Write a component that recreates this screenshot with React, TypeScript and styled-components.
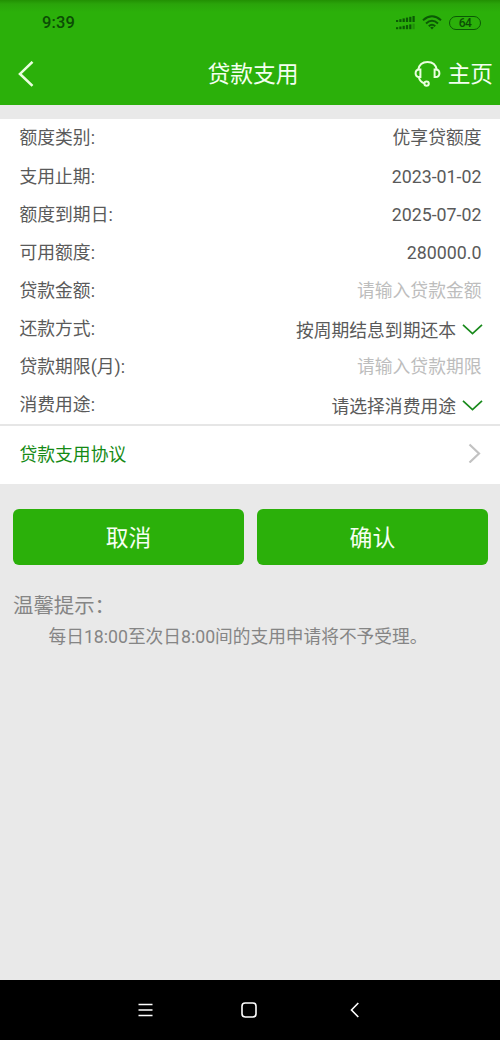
import React from "react";
import styled, { createGlobalStyle } from "styled-components";

const Global = createGlobalStyle`
  * { box-sizing: border-box; }
  body {
    margin: 0;
    background: #e9e9e9;
    font-family: Roboto, "Noto Sans CJK SC", sans-serif;
  }
`;

const Screen = styled.div`
  width: 500px;
  height: 1040px;
  display: flex;
  flex-direction: column;
  background: #e9e9e9;
  overflow: hidden;
`;

const Header = styled.header`
  height: 105px;
  flex: none;
  background: linear-gradient(#229003 0, #2aa40a 4px, #2bb00a 12px);
`;

const StatusBar = styled.div`
  height: 44px;
  padding: 1px 19px 0 42px;
  display: flex;
  align-items: center;
  color: #0b4d05;
`;

const Clock = styled.span`
  flex: 1;
  font-size: 16.5px;
  font-weight: 500;
  letter-spacing: 0.1px;
`;

const Signal = styled.svg`
  margin-right: 7px;
`;

const Wifi = styled.svg`
  margin-right: 7px;
`;

const Battery = styled.span`
  width: 32px;
  height: 14px;
  border: 1.5px solid #0b5a05;
  border-radius: 7px;
  display: flex;
  align-items: center;
  justify-content: center;
  font-size: 12px;
  line-height: 12px;
  font-weight: 500;
  letter-spacing: -0.5px;
`;

const TitleBar = styled.div`
  height: 61px;
  padding: 0 7px 0 18px;
  display: grid;
  grid-template-columns: 80px 1fr 80px;
  align-items: center;
  color: #f4fff0;
`;

const Title = styled.h1`
  margin: 0;
  padding-right: 5px;
  text-align: center;
  font-size: 22.8px;
  font-weight: 400;
  line-height: 34px;
`;

const HomeLink = styled.div`
  display: flex;
  align-items: center;
  justify-content: flex-end;
  gap: 7px;
  font-size: 22.7px;
  line-height: 34px;
  white-space: nowrap;
`;

const Form = styled.section`
  margin-top: 14px;
  flex: none;
  background: #fff;
  border-bottom: 2px solid #e6e6e6;
`;

const Row = styled.div`
  height: 38.2px;
  padding: 0.5px 18px 0 19.5px;
  display: flex;
  align-items: center;
  justify-content: space-between;
  font-size: 17.8px;
  line-height: 26px;
  color: #5a5a5a;

  &:last-child {
    height: 37.6px;
  }
`;

const Value = styled.span<{ $hint?: boolean; $select?: boolean }>`
  display: flex;
  align-items: center;
  gap: 6px;
  color: ${(p) => (p.$hint ? "#bdbdbd" : "#5a5a5a")};
  padding-top: ${(p) => (p.$select ? "3px" : "0")};
  margin-right: ${(p) => (p.$select ? "-1px" : "0.5px")};
`;

const Agreement = styled.div`
  height: 57.6px;
  flex: none;
  padding: 0 19px 3px 19.5px;
  display: flex;
  align-items: center;
  justify-content: space-between;
  background: #fff;
  font-size: 17.8px;
  color: #158a15;
`;

const Actions = styled.div`
  margin-top: 25px;
  padding: 0 12px 0 13px;
  display: grid;
  grid-template-columns: 1fr 1fr;
  gap: 12.6px;
`;

const Button = styled.button`
  height: 56px;
  padding: 0 0 1px;
  border: 0;
  border-radius: 6px;
  background: #2bb00a;
  color: #f6fff3;
  font-family: inherit;
  font-size: 22.8px;
`;

const Tips = styled.section`
  flex: 1;
  padding: 25px 13px 0;
  color: #858585;
`;

const TipsTitle = styled.div`
  font-size: 20.4px;
  line-height: 32px;
`;

const TipsText = styled.div`
  padding-left: 35.5px;
  font-size: 17.7px;
  line-height: 31px;
  white-space: nowrap;
`;

const NavBar = styled.nav`
  height: 60px;
  flex: none;
  padding: 0 140.5px 0 138px;
  display: flex;
  align-items: center;
  justify-content: space-between;
  background: #000;
`;

const HomeKey = styled.svg`
  margin-right: 5.5px;
`;

const rows: { label: string; value: string; kind?: "hint" | "select" }[] = [
  { label: "额度类别:", value: "优享贷额度" },
  { label: "支用止期:", value: "2023-01-02" },
  { label: "额度到期日:", value: "2025-07-02" },
  { label: "可用额度:", value: "280000.0" },
  { label: "贷款金额:", value: "请输入贷款金额", kind: "hint" },
  { label: "还款方式:", value: "按周期结息到期还本", kind: "select" },
  { label: "贷款期限(月):", value: "请输入贷款期限", kind: "hint" },
  { label: "消费用途:", value: "请选择消费用途", kind: "select" },
];

const signalBars = [0, 1, 2, 3, 4, 5];

const DownChevron = () => (
  <svg width="21" height="14" viewBox="0 0 21 14" fill="none" stroke="#198a1c" strokeWidth="1.7">
    <path d="M1 0.8 L10.5 9.6 L20 0.8" />
  </svg>
);

export default function App() {
  return (
    <Screen>
      <Global />
      <Header>
        <StatusBar>
          <Clock>9:39</Clock>
          <Signal width="19" height="16" viewBox="0 0 19 16" fill="#0b5a05">
            {signalBars.map((i) => (
              <rect key={i} x={i * 3.3} y={5 - i * 0.8} width="2.2" height={2 + i * 0.8} />
            ))}
            {signalBars.map((i) => (
              <rect
                key={i}
                x={i * 3.3}
                y={12.2 - i * 0.7}
                width="2.2"
                height={2 + i * 0.7}
                opacity={i === 5 ? 0.35 : 1}
              />
            ))}
          </Signal>
          <Wifi width="20" height="15" viewBox="0 0 20 15" fill="none" stroke="#0b5a05" strokeWidth="2">
            <path d="M1 5.2 Q10 -2.6 19 5.2" />
            <path d="M4 8.4 Q10 3 16 8.4" />
            <path d="M6.8 11.2 Q10 8.2 13.2 11.2" />
            <path d="M8.2 12.4 Q10 11 11.8 12.4 L10 14.4Z" fill="#0b5a05" stroke="none" />
          </Wifi>
          <Battery>64</Battery>
        </StatusBar>
        <TitleBar>
          <svg width="16" height="28" viewBox="0 0 16 28" fill="none" stroke="#eaffdf" strokeWidth="2.6">
            <path d="M14.5 0.9 L2 12.9 L14.5 24.9" />
          </svg>
          <Title>贷款支用</Title>
          <HomeLink>
            <svg width="27" height="28" viewBox="0 0 27 28" fill="none" stroke="#eaffdf" strokeWidth="2">
              <path d="M4.2 9 C5 4.1 8.6 1.1 13.5 1.1 C18.4 1.1 22 4.1 22.8 9" />
              <path d="M6.4 8.5 V16.1 H5.3 C3 16.1 1.6 14.5 1.6 12.3 C1.6 10.1 3 8.5 5.3 8.5Z" />
              <path d="M20.6 8.5 V16.1 H21.7 C24 16.1 25.4 14.5 25.4 12.3 C25.4 10.1 24 8.5 21.7 8.5Z" />
              <path d="M4.8 16.3 C5.7 19.7 7.5 21.5 10.2 22.3" />
              <circle cx="12.6" cy="22.6" r="2.2" />
            </svg>
            主页
          </HomeLink>
        </TitleBar>
      </Header>

      <Form>
        {rows.map((r) => (
          <Row key={r.label}>
            <span>{r.label}</span>
            <Value $hint={r.kind === "hint"} $select={r.kind === "select"}>
              {r.value}
              {r.kind === "select" && <DownChevron />}
            </Value>
          </Row>
        ))}
      </Form>

      <Agreement>
        贷款支用协议
        <svg width="13" height="20" viewBox="0 0 13 20" fill="none" stroke="#c2c2c2" strokeWidth="2.2">
          <path d="M1.5 1.5 L11 10.5 L1.5 19.5" />
        </svg>
      </Agreement>

      <Actions>
        <Button>取消</Button>
        <Button>确认</Button>
      </Actions>

      <Tips>
        <TipsTitle>温馨提示：</TipsTitle>
        <TipsText>每日18:00至次日8:00间的支用申请将不予受理。</TipsText>
      </Tips>

      <NavBar>
        <svg width="15" height="14" viewBox="0 0 15 14" stroke="#fff" strokeWidth="1.5">
          <path d="M0.5 1.5 H14.5 M0.5 7 H14.5 M0.5 12.5 H14.5" />
        </svg>
        <HomeKey width="16" height="16" viewBox="0 0 16 16" fill="none" stroke="#fff" strokeWidth="1.6">
          <rect x="1" y="1" width="14" height="14" rx="3.2" />
        </HomeKey>
        <svg width="10" height="16" viewBox="0 0 10 16" fill="none" stroke="#fff" strokeWidth="1.6">
          <path d="M8.3 1 L1.5 8 L8.3 15" />
        </svg>
      </NavBar>
    </Screen>
  );
}
